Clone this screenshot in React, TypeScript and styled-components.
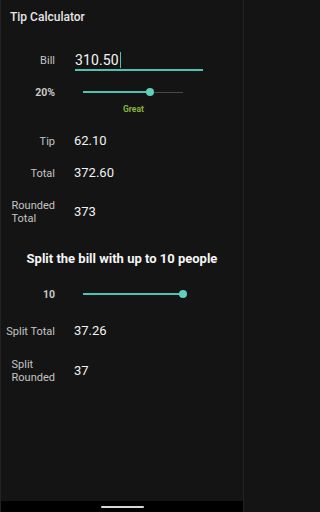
import React from 'react'
import styled, { createGlobalStyle } from 'styled-components'

const GlobalStyle = createGlobalStyle`
  html, body {
    margin: 0;
    padding: 0;
    background: #141414;
  }
  * {
    box-sizing: border-box;
  }
`

const Screen = styled.div`
  width: 244px;
  height: 512px;
  display: flex;
  flex-direction: column;
  background: #141414;
  font-family: Roboto, 'Liberation Sans', sans-serif;
  border-left: 1px solid #222;
  border-right: 1px solid #222;
`

const Content = styled.div`
  flex: 1;
  display: flex;
  flex-direction: column;
`

const Title = styled.h1`
  margin: 10px 0 0 9px;
  font-size: 12px;
  font-weight: 500;
  color: #e6e6e6;
  line-height: 14px;
`

const Row = styled.div<{ $top: number; $height?: number }>`
  display: flex;
  align-items: center;
  margin-top: ${(p) => p.$top}px;
  height: ${(p) => p.$height ?? 16}px;
`

const LabelCell = styled.div`
  width: 54px;
  flex-shrink: 0;
  display: flex;
  justify-content: flex-end;
`

const Label = styled.span<{ $bold?: boolean }>`
  font-size: ${(p) => (p.$bold ? 10.5 : 11)}px;
  font-weight: ${(p) => (p.$bold ? 700 : 400)};
  color: ${(p) => (p.$bold ? '#c8c8c8' : '#c4c4c4')};
  line-height: 13px;
  text-align: left;
`

const Value = styled.span<{ $size?: number }>`
  margin-left: 19px;
  font-size: ${(p) => p.$size ?? 13}px;
  color: #f2f2f2;
  line-height: 16px;
`

const InputWrap = styled.div`
  margin-left: 20px;
  width: 128px;
  height: 22px;
  display: flex;
  align-items: center;
  border-bottom: 2px solid #4fc3b1;
  padding-top: 2px;
`

const InputText = styled.span`
  font-size: 14px;
  color: #f4f4f4;
  line-height: 16px;
  letter-spacing: 0.1px;
`

const Caret = styled.span`
  width: 1.5px;
  height: 16px;
  margin-left: 1px;
  background: #4fc3b1;
`

const SliderTrack = styled.div`
  position: relative;
  margin-left: 28px;
  width: 100px;
  height: 8px;
  display: flex;
  align-items: center;
`

const Inactive = styled.div`
  position: absolute;
  left: 0;
  right: 0;
  height: 1px;
  background: #4a4a4a;
`

const Active = styled.div`
  position: absolute;
  left: 0;
  height: 2px;
  background: #4fc3b1;
`

const Thumb = styled.div`
  position: absolute;
  width: 8px;
  height: 8px;
  margin-left: -4px;
  border-radius: 50%;
  background: #5fd0bd;
`

const Mood = styled.div`
  margin: 4px 0 0 122px;
  font-size: 8.5px;
  font-weight: 700;
  color: #86b33a;
  line-height: 10px;
`

const SplitHeading = styled.h2`
  margin: 25px 0 0;
  text-align: center;
  font-size: 13px;
  font-weight: 700;
  color: #f5f5f5;
  line-height: 15px;
`

const NavBar = styled.div`
  height: 11px;
  background: #000;
  display: flex;
  align-items: center;
  justify-content: center;
`

const HomePill = styled.div`
  width: 43px;
  height: 2px;
  border-radius: 1px;
  background: #d8d8d8;
`

const Slider: React.FC<{ value: number; min: number; max: number }> = ({ value, min, max }) => {
  const pct = ((value - min) / (max - min)) * 100
  return (
    <SliderTrack>
      <Inactive />
      <Active style={{ width: `${pct}%` }} />
      <Thumb style={{ left: `${pct}%` }} />
    </SliderTrack>
  )
}

export default function App() {
  const bill = 310.5
  const tipPercent = 20
  const people = 10
  const tip = (bill * tipPercent) / 100
  const total = bill + tip
  const split = total / people

  return (
    <>
      <GlobalStyle />
      <Screen>
        <Content>
          <Title>Tip Calculator</Title>

          <Row $top={25} $height={22}>
            <LabelCell>
              <Label>Bill</Label>
            </LabelCell>
            <InputWrap>
              <InputText>310.50</InputText>
              <Caret />
            </InputWrap>
          </Row>

          <Row $top={13}>
            <LabelCell>
              <Label $bold>{tipPercent}%</Label>
            </LabelCell>
            <Slider value={tipPercent} min={0} max={30} />
          </Row>
          <Mood>Great</Mood>

          <Row $top={19}>
            <LabelCell>
              <Label>Tip</Label>
            </LabelCell>
            <Value>{tip.toFixed(2)}</Value>
          </Row>

          <Row $top={16}>
            <LabelCell>
              <Label>Total</Label>
            </LabelCell>
            <Value>{total.toFixed(2)}</Value>
          </Row>

          <Row $top={17} $height={28}>
            <LabelCell>
              <Label>
                Rounded
                <br />
                Total
              </Label>
            </LabelCell>
            <Value>{Math.ceil(total)}</Value>
          </Row>

          <SplitHeading>Split the bill with up to {people} people</SplitHeading>

          <Row $top={20}>
            <LabelCell>
              <Label $bold>{people}</Label>
            </LabelCell>
            <Slider value={people} min={1} max={10} />
          </Row>

          <Row $top={21}>
            <LabelCell>
              <Label>Split Total</Label>
            </LabelCell>
            <Value>{split.toFixed(2)}</Value>
          </Row>

          <Row $top={18} $height={28}>
            <LabelCell>
              <Label>
                Split
                <br />
                Rounded
              </Label>
            </LabelCell>
            <Value>{Math.floor(split)}</Value>
          </Row>
        </Content>
        <NavBar>
          <HomePill />
        </NavBar>
      </Screen>
    </>
  )
}
